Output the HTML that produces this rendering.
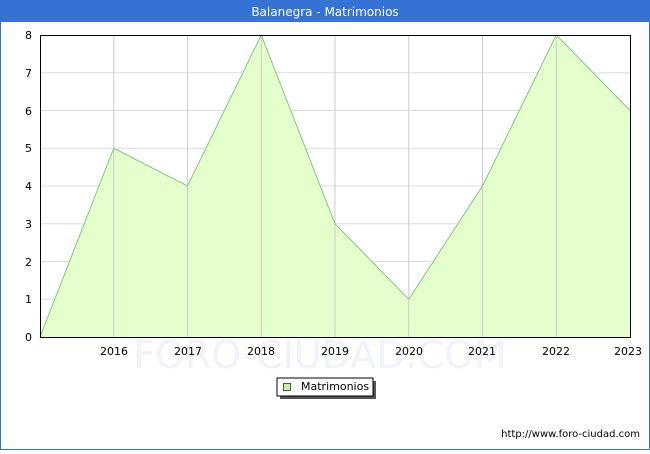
<!DOCTYPE html>
<html><head><style>
body{margin:0;width:650px;height:450px;overflow:hidden;background:#fff;font-family:"DejaVu Sans","Liberation Sans",sans-serif}
</style></head><body>
<svg width="650" height="450" xmlns="http://www.w3.org/2000/svg" font-family="DejaVu Sans, Liberation Sans, sans-serif">
<rect x="0.5" y="0.5" width="649" height="449" fill="#fff" stroke="#3473d4"/>
<rect x="0" y="0" width="650" height="22" fill="#3473d4"/>
<text x="325" y="16" fill="#fff" font-size="12" text-anchor="middle">Balanegra - Matrimonios</text>
<text x="320" y="368" fill="#f0f2fc" font-size="38" text-anchor="middle">FORO-CIUDAD.COM</text>
<g stroke="#ddd" stroke-width="1">
<line x1="40" y1="72.75" x2="630" y2="72.75"/><line x1="40" y1="110.5" x2="630" y2="110.5"/>
<line x1="40" y1="148.25" x2="630" y2="148.25"/><line x1="40" y1="186" x2="630" y2="186"/>
<line x1="40" y1="223.75" x2="630" y2="223.75"/><line x1="40" y1="261.5" x2="630" y2="261.5"/>
<line x1="40" y1="299.25" x2="630" y2="299.25"/>
</g>
<polygon points="40,337 113.75,148.25 187.5,186 261.25,35 335,223.75 408.75,299.25 482.5,186 556.25,35 630,110.5 630,337" fill="#e4ffcc"/>
<g stroke="#ccc" stroke-width="1">
<line x1="113.75" y1="35" x2="113.75" y2="337"/><line x1="187.5" y1="35" x2="187.5" y2="337"/>
<line x1="261.25" y1="35" x2="261.25" y2="337"/><line x1="335" y1="35" x2="335" y2="337"/>
<line x1="408.75" y1="35" x2="408.75" y2="337"/><line x1="482.5" y1="35" x2="482.5" y2="337"/>
<line x1="556.25" y1="35" x2="556.25" y2="337"/>
</g>
<polyline points="40,337 113.75,148.25 187.5,186 261.25,35 335,223.75 408.75,299.25 482.5,186 556.25,35 630,110.5" fill="none" stroke="#80c880" stroke-width="1"/>
<rect x="40.5" y="35.5" width="590" height="302" fill="none" stroke="#000"/>
<g font-size="11" fill="#000" text-anchor="end">
<text x="32" y="39">8</text><text x="32" y="77">7</text><text x="32" y="115">6</text>
<text x="32" y="152">5</text><text x="32" y="190">4</text><text x="32" y="228">3</text>
<text x="32" y="266">2</text><text x="32" y="303">1</text><text x="32" y="341">0</text>
</g>
<g font-size="11" fill="#000" text-anchor="middle">
<text x="114" y="355">2016</text><text x="188" y="355">2017</text><text x="261" y="355">2018</text>
<text x="335" y="355">2019</text><text x="409" y="355">2020</text><text x="482" y="355">2021</text>
<text x="556" y="355">2022</text><text x="628" y="355">2023</text>
</g>
<rect x="280" y="381" width="96" height="18" fill="#555"/>
<rect x="277" y="378" width="96" height="18" fill="#fff" stroke="#000"/>
<rect x="283.5" y="383.5" width="7" height="7" fill="#c8f0a0" stroke="#555"/>
<text x="301" y="390" font-size="11" fill="#000">Matrimonios</text>
<text x="640" y="437" font-size="10" fill="#000" text-anchor="end">http://www.foro-ciudad.com</text>
</svg>
</body></html>
